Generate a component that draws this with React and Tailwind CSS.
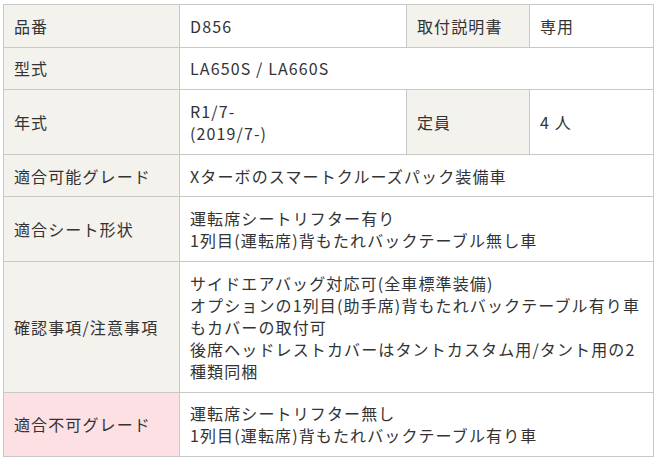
import React from "react";

const th = "bg-[#f3f2ed] border border-[#c8c8c8] px-[10px] py-[9.8px] text-left font-normal align-middle";
const td = "bg-white border border-[#c8c8c8] px-[10px] py-[9.8px] align-middle";

export default function App() {
  return (
    <div className="w-[657px] h-[464px] bg-white pt-[4px] pl-[3px]">
      <table
        className="table-fixed border-collapse w-[650px] text-[16px] leading-[22px] text-[#333] tracking-[0.07em]"
        style={{ fontFamily: '"Noto Sans CJK JP", "Noto Sans", sans-serif' }}
      >
        <colgroup>
          <col className="w-[176px]" />
          <col className="w-[227px]" />
          <col className="w-[123px]" />
          <col className="w-[124px]" />
        </colgroup>
        <tbody>
          <tr>
            <th className={th}>品番</th>
            <td className={td}>D856</td>
            <th className={th}>取付説明書</th>
            <td className={td}>専用</td>
          </tr>
          <tr>
            <th className={th}>型式</th>
            <td className={td} colSpan={3}>LA650S / LA660S</td>
          </tr>
          <tr>
            <th className={th}>年式</th>
            <td className={td}>
              R1/7-
              <br />
              (2019/7-)
            </td>
            <th className={th}>定員</th>
            <td className={td}>4 人</td>
          </tr>
          <tr>
            <th className={th}>適合可能グレード</th>
            <td className={td} colSpan={3}>Xターボのスマートクルーズパック装備車</td>
          </tr>
          <tr>
            <th className={th}>適合シート形状</th>
            <td className={td} colSpan={3}>
              運転席シートリフター有り
              <br />
              1列目(運転席)背もたれバックテーブル無し車
            </td>
          </tr>
          <tr>
            <th className={th}>確認事項/注意事項</th>
            <td className={td} colSpan={3}>
              サイドエアバッグ対応可(全車標準装備)
              <br />
              オプションの1列目(助手席)背もたれバックテーブル有り車
              <br />
              もカバーの取付可
              <br />
              後席ヘッドレストカバーはタントカスタム用/タント用の2
              <br />
              種類同梱
            </td>
          </tr>
          <tr>
            <th className="bg-[#fde0e3] border border-[#c8c8c8] px-[10px] py-[9.8px] text-left font-normal align-middle">
              適合不可グレード
            </th>
            <td className={td} colSpan={3}>
              運転席シートリフター無し
              <br />
              1列目(運転席)背もたれバックテーブル有り車
            </td>
          </tr>
        </tbody>
      </table>
    </div>
  );
}
